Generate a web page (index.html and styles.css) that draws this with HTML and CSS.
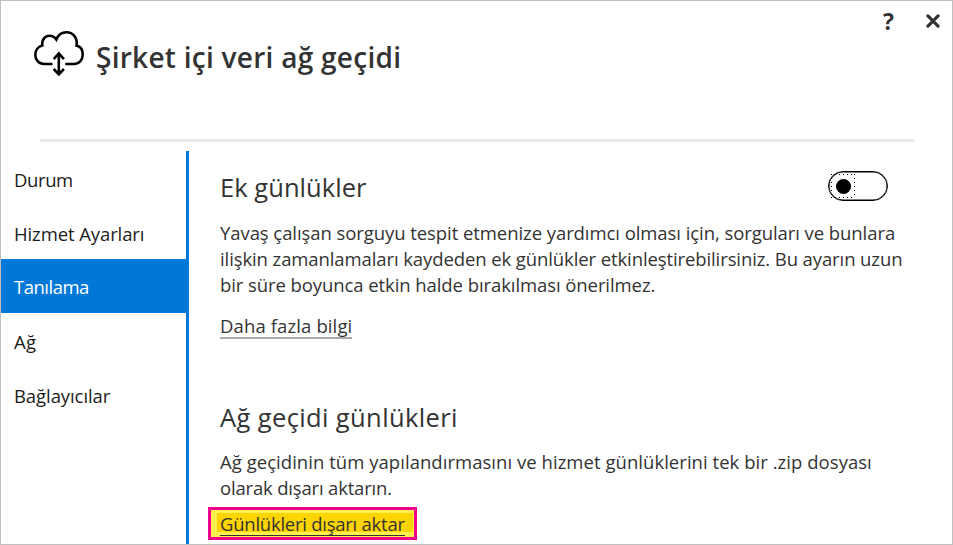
FILE: index.html
```html
<!DOCTYPE html>
<html lang="tr">
<head>
<meta charset="utf-8">
<title>Şirket içi veri ağ geçidi</title>
<link rel="stylesheet" href="styles.css">
</head>
<body>
<div class="window">
  <header class="header">
    <svg class="cloud" width="56" height="52" viewBox="0 0 56 52" fill="none" stroke="#000" stroke-width="2.6">
      <path d="M20.5 38H12.3C6.500 38 3.300 33.700 3.300 28.800C3.300 24 6.500 20.500 10.300 19.500C9.500 13.500 13.300 9.800 17.500 9.800C20.500 9.800 22.700 11.200 24.300 13.500C26.300 8.500 30.500 6.200 34.500 6.200C40.600 6.200 45.800 11.500 44.600 19.800C48.800 20.500 50.700 24.500 50.700 28.800C50.700 34 47 38 41.800 38H33.200"/>
      <path d="M26.800 27.500V47.500M21.700 33.200L26.800 27.500L31.900 33.200M21.700 43L26.800 48.400L31.900 43"/>
    </svg>
    <h1 class="title">Şirket içi veri ağ geçidi</h1>
    <div class="controls">
      <span class="help">?</span>
      <svg class="close" width="14" height="14" viewBox="0 0 14 14" stroke="#333" stroke-width="3.2" stroke-linecap="round"><path d="M1.900 1.900L12.100 12.100M12.100 1.900L1.900 12.100"/></svg>
    </div>
  </header>
  <div class="rule"></div>
  <div class="main">
    <nav class="nav">
      <a class="item"><span class="n1">Durum</span></a>
      <a class="item"><span class="n2">Hizmet Ayarları</span></a>
      <a class="item active"><span class="n3">Tanılama</span></a>
      <a class="item"><span class="n4">Ağ</span></a>
      <a class="item"><span class="n5">Bağlayıcılar</span></a>
    </nav>
    <main class="content">
      <div class="heading-row">
        <h2 class="heading h-a">Ek günlükler</h2>
        <div class="toggle"><span class="focus"><span class="knob"></span></span></div>
      </div>
      <p class="text"><span class="t1">Yavaş çalışan sorguyu tespit etmenize yardımcı olması için, sorguları ve bunlara</span><br><span class="t2">ilişkin zamanlamaları kaydeden ek günlükler etkinleştirebilirsiniz. Bu ayarın uzun</span><br><span class="t3">bir süre boyunca etkin halde bırakılması önerilmez.</span></p>
      <a class="link more">Daha fazla bilgi</a>
      <h2 class="heading h-b">Ağ geçidi günlükleri</h2>
      <p class="text"><span class="t4">Ağ geçidinin tüm yapılandırmasını ve hizmet günlüklerini tek bir .zip dosyası</span><br><span class="t5">olarak dışarı aktarın.</span></p>
      <div class="callout"><div class="marker"><a class="link export">Günlükleri dışarı aktar</a></div></div>
    </main>
  </div>
</div>
</body>
</html>
```
FILE: styles.css
```css
* { box-sizing: border-box; }
body { margin: 0; font-family: "Open Sans", "Noto Sans", sans-serif; font-size: 18.5px; color: #333; background: #fff; }
h1, h2, p { margin: 0; font-weight: 400; }
.window { width: 953px; height: 545px; border: 1px solid #bfbfbf; overflow: hidden; }
.header { display: flex; height: 138px; padding-left: 31px; }
.cloud { margin-top: 25px; flex: none; }
.title { margin: 36px 0 0 8px; font-size: 28px; line-height: 40px; font-weight: 600; letter-spacing: 0.27px; white-space: nowrap; }
.controls { display: flex; margin: 0 12px 0 auto; padding-top: 5px; }
.help { font-size: 23px; line-height: 30px; font-weight: 700; margin-right: 32px; }
.close { margin-top: 8px; }
.rule { height: 3px; margin: 0 38px 0 39px; background: #e8e8e8; }
.main { display: flex; padding-top: 9px; height: 405px; }
.nav { width: 188px; border-right: 3px solid #0078d7; flex: none; }
.item { display: flex; align-items: center; height: 54px; padding: 2px 0 0 13px; color: #1c1c1c; white-space: nowrap; }
.item.active { padding-top: 0; background: #0078d7; color: #fff; }
.n1 { letter-spacing: -0.4px; }
.n2 { letter-spacing: -0.1px; }
.n3 { letter-spacing: -0.5px; }
.n4 { letter-spacing: 0.4px; }
.n5 { letter-spacing: -0.08px; }
.content { padding-left: 31px; width: 699px; flex: none; white-space: nowrap; }
.heading-row { display: flex; justify-content: space-between; height: 69px; padding-top: 17px; }
.heading { font-size: 25.5px; line-height: 38px; }
.h-a { letter-spacing: 0.05px; }
.toggle { width: 60px; height: 30px; margin-top: 3px; border: 1px solid #000; box-shadow: inset 0 0 0 0.5px #000; border-radius: 15px; padding: 2px; }
.focus { display: flex; align-items: center; justify-content: center; width: 24px; height: 24px; background: repeating-linear-gradient(90deg, #000 0 1.5px, transparent 1.5px 4px) top / 100% 1px no-repeat, repeating-linear-gradient(90deg, #000 0 1.5px, transparent 1.5px 4px) bottom / 100% 1px no-repeat, repeating-linear-gradient(#000 0 1.5px, transparent 1.5px 4px) left / 1px 100% no-repeat, repeating-linear-gradient(#000 0 1.5px, transparent 1.5px 4px) right / 1px 100% no-repeat; }
.knob { width: 15px; height: 15px; border-radius: 50%; background: #000; }
.text { line-height: 26px; }
.t1 { letter-spacing: -0.07px; }
.t2 { letter-spacing: -0.1px; }
.t3 { letter-spacing: -0.08px; }
.t4 { letter-spacing: 0.04px; }
.t5 { letter-spacing: -0.18px; }
.link { display: block; line-height: 24px; width: max-content; }
.more { height: 25px; margin-top: 16px; border-bottom: 2px solid #aaa; letter-spacing: 0.12px; }
.h-b { margin: 59px 0 13px; letter-spacing: 0.38px; }
.callout { width: 209px; height: 33px; margin: 6px 0 0 -12px; padding: 3px; border: 3px solid #ec008c; background: #fff04f; }
.marker { height: 19px; width: 196px; margin-left: 3px; padding-left: 3px; background: #ffd500; }
.export { height: 23px; line-height: 22px; border-bottom: 1px solid #333; letter-spacing: -0.25px; }
```
